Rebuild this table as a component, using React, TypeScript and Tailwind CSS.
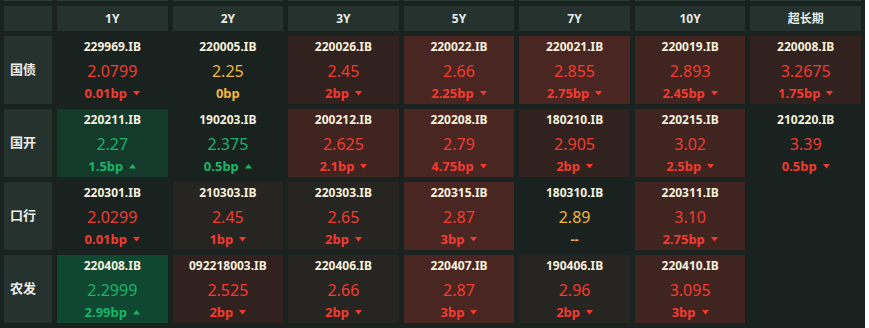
type Dir = "up" | "down" | "flat";

type Quote = {
  code: string;
  value: string;
  change: string;
  dir: Dir;
  bg: string;
};

const terms = ["1Y", "2Y", "3Y", "5Y", "7Y", "10Y", "超长期"];

const q = (code: string, value: string, change: string, dir: Dir, bg: string): Quote => ({
  code,
  value,
  change,
  dir,
  bg,
});

const none = "";
const dim = "bg-[#272521]";
const red1 = "bg-[#31221f]";
const red2 = "bg-[#3f2420]";
const red3 = "bg-[#4a2622]";
const green1 = "bg-[#143a2b]";
const green2 = "bg-[#0f4731]";

const rows: { name: string; cells: (Quote | null)[] }[] = [
  {
    name: "国债",
    cells: [
      q("229969.IB", "2.0799", "0.01bp", "down", none),
      q("220005.IB", "2.25", "0bp", "flat", none),
      q("220026.IB", "2.45", "2bp", "down", red1),
      q("220022.IB", "2.66", "2.25bp", "down", red3),
      q("220021.IB", "2.855", "2.75bp", "down", red3),
      q("220019.IB", "2.893", "2.45bp", "down", red2),
      q("220008.IB", "3.2675", "1.75bp", "down", red1),
    ],
  },
  {
    name: "国开",
    cells: [
      q("220211.IB", "2.27", "1.5bp", "up", green1),
      q("190203.IB", "2.375", "0.5bp", "up", none),
      q("200212.IB", "2.625", "2.1bp", "down", red2),
      q("220208.IB", "2.79", "4.75bp", "down", red3),
      q("180210.IB", "2.905", "2bp", "down", red1),
      q("220215.IB", "3.02", "2.5bp", "down", red2),
      q("210220.IB", "3.39", "0.5bp", "down", none),
    ],
  },
  {
    name: "口行",
    cells: [
      q("220301.IB", "2.0299", "0.01bp", "down", none),
      q("210303.IB", "2.45", "1bp", "down", dim),
      q("220303.IB", "2.65", "2bp", "down", dim),
      q("220315.IB", "2.87", "3bp", "down", red3),
      q("180310.IB", "2.89", "--", "flat", none),
      q("220311.IB", "3.10", "2.75bp", "down", red2),
      null,
    ],
  },
  {
    name: "农发",
    cells: [
      q("220408.IB", "2.2999", "2.99bp", "up", green2),
      q("092218003.IB", "2.525", "2bp", "down", red1),
      q("220406.IB", "2.66", "2bp", "down", dim),
      q("220407.IB", "2.87", "3bp", "down", red3),
      q("190406.IB", "2.96", "2bp", "down", dim),
      q("220410.IB", "3.095", "3bp", "down", red2),
      null,
    ],
  },
];

const tone = {
  up: "text-[#1ab46a]",
  down: "text-[#f23b30]",
  flat: "text-[#f2b63c]",
};

const Arrow = ({ dir }: { dir: Dir }) => {
  if (dir === "flat") return null;
  return (
    <svg width="7" height="5" viewBox="0 0 7 5" className="ml-[6px]">
      {dir === "down" ? (
        <polygon points="0,0 7,0 3.5,4.5" fill="currentColor" />
      ) : (
        <polygon points="0,4.5 7,4.5 3.5,0" fill="currentColor" />
      )}
    </svg>
  );
};

const Cell = ({ data }: { data: Quote | null }) => {
  if (!data) return <div className="h-[68px]" />;
  return (
    <div className={`h-[68px] flex flex-col items-center pt-[3px] ${data.bg}`}>
      <div className="text-[12px] font-bold leading-[16px] text-[#f6f0dd]">{data.code}</div>
      <div className={`mt-[5px] text-[16px] leading-[22px] ${tone[data.dir]}`}>{data.value}</div>
      <div className={`mt-[3px] flex items-center text-[13px] font-bold leading-[16px] ${tone[data.dir]}`}>
        {data.change}
        <Arrow dir={data.dir} />
      </div>
    </div>
  );
};

export default function App() {
  return (
    <div className="w-[865px] h-[328px] bg-[#19221f] px-[4px] font-['Noto_Sans','Noto_Sans_CJK_SC',sans-serif] overflow-hidden">
      {/* bottom edge of the row above, scrolled out of view */}
      <div className="grid grid-cols-[48px_repeat(7,1fr)] gap-x-[5px] mb-[5px]">
        {Array.from({ length: 8 }).map((_, i) => (
          <div key={i} className="h-[1px] bg-[#2b3f38]" />
        ))}
      </div>

      <div className="grid grid-cols-[48px_repeat(7,1fr)] gap-x-[5px] gap-y-[5px]">
        <div className="h-[25px] bg-[#25322e]" />
        {terms.map((t) => (
          <div
            key={t}
            className="h-[25px] bg-[#25322e] flex items-center justify-center text-[12px] font-bold text-[#e8ebe6]"
          >
            {t}
          </div>
        ))}

        {rows.map((row) => (
          <div key={row.name} className="contents">
            <div className="h-[68px] bg-[#25322e] flex items-center pl-[6px] text-[13px] font-bold text-[#eeeeea]">
              {row.name}
            </div>
            {row.cells.map((c, i) => (
              <Cell key={i} data={c} />
            ))}
          </div>
        ))}
      </div>
    </div>
  );
}
